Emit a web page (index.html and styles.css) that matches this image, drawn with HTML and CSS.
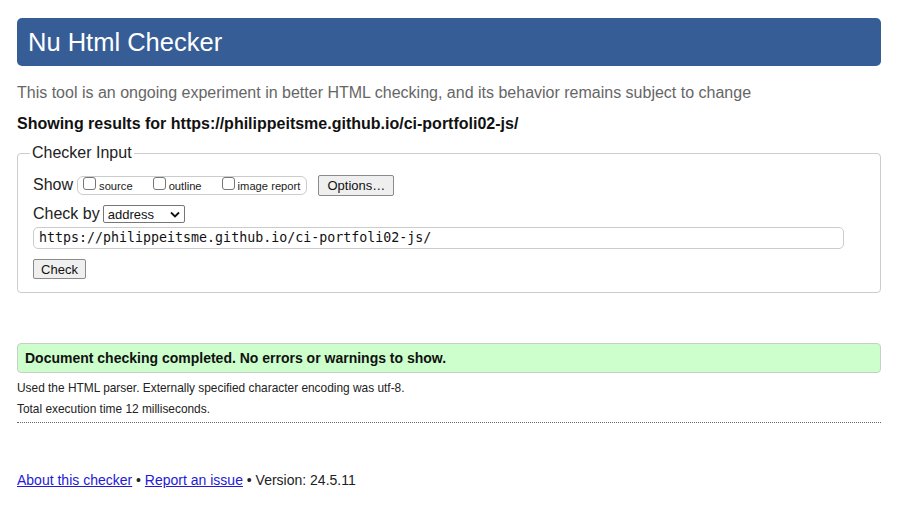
FILE: index.html
```html
<!DOCTYPE html>
<html>
<head>
<meta charset="utf-8">
<title>Nu Html Checker</title>
<link rel="stylesheet" href="styles.css">
</head>
<body>
<h1 class="banner">Nu Html Checker</h1>
<p class="lede">This tool is an ongoing experiment in better HTML checking, and its behavior remains subject to change</p>
<p class="showing">Showing results for https://philippeitsme.github.io/ci-portfoli02-js/</p>
<fieldset class="input-box">
  <legend class="legend">Checker Input</legend>
  <div class="row row1">
    <span class="label">Show</span>
    <span class="group">
      <label class="opt"><span class="cb"></span>source</label>
      <label class="opt"><span class="cb"></span>outline</label>
      <label class="opt"><span class="cb"></span>image report</label>
    </span>
    <button class="btn opts">Options…</button>
  </div>
  <div class="row row2">
    <span class="label">Check by</span>
    <span class="select">address<svg width="10" height="7" viewBox="0 0 10 7"><path d="M1 1.5 L5 5.5 L9 1.5" fill="none" stroke="#111" stroke-width="1.8"/></svg></span>
  </div>
  <div class="url">https://philippeitsme.github.io/ci-portfoli02-js/</div>
  <button class="btn check">Check</button>
</fieldset>
<div class="success">Document checking completed. No errors or warnings to show.</div>
<p class="details first">Used the HTML parser. Externally specified character encoding was utf-8.</p>
<p class="details">Total execution time 12 milliseconds.</p>
<hr class="sep">
<p class="footer"><a href="#">About this checker</a> • <a href="#">Report an issue</a> • Version: 24.5.11</p>
</body>
</html>
```
FILE: styles.css
```css
html, body { margin: 0; background: #fff; }
body {
  padding: 18px 17px 0;
  font-family: "Liberation Sans", Arial, sans-serif;
  color: #111;
}
.banner {
  margin: 0;
  height: 48px;
  background: #365d95;
  color: #fff;
  border-radius: 5px;
  font-weight: normal;
  font-size: 25.5px;
  line-height: 48px;
  padding-left: 11px;
}
.lede {
  margin: 17px 0 0;
  font-size: 16px;
  line-height: 19px;
  color: #666;
}
.showing {
  margin: 12px 0 0;
  font-size: 16px;
  line-height: 19px;
  font-weight: bold;
  color: #111;
}
.input-box {
  margin: 11px 0 0;
  border: 1px solid #ccc;
  border-radius: 4px;
  padding: 8px 15px 13px 15px;
}
.legend {
  font-size: 16px;
  padding: 0 2px;
  margin-left: -3px;
  color: #222;
}
.row { display: flex; align-items: center; height: 22px; }
.row1 { margin-top: 4px; }
.label { font-size: 16px; color: #222; margin-right: 4px; }
.row2 .label { margin-right: 3px; }
.group {
  display: inline-flex;
  align-items: center;
  border: 1px solid #ccc;
  border-radius: 6px;
  height: 17px;
  padding: 0 6px 0 5px;
  margin-right: 11px;
  margin-top: 1px;
}
.opt {
  display: inline-flex;
  align-items: center;
  font-size: 11.2px;
  color: #222;
  margin-right: 20px;
}
.opt:last-child { margin-right: 0; }
.cb {
  width: 11px;
  height: 11px;
  border: 1px solid #777;
  border-radius: 3px;
  margin-right: 3px;
  margin-top: -4px;
  background: #fff;
}
.btn {
  font-family: "Liberation Sans", Arial, sans-serif;
  font-size: 13px;
  color: #111;
  background: #efefef;
  border: 1px solid #8a8a8a;
  border-radius: 2px;
  padding: 0 7px;
  height: 21px;
}
.opts { width: 76px; }
.row2 { margin-top: 7px; }
.select {
  display: inline-flex;
  align-items: center;
  justify-content: space-between;
  width: 82px;
  height: 18px;
  box-sizing: border-box;
  border: 1px solid #767676;
  border-radius: 2px;
  padding: 0 4px 0 4px;
  font-size: 13px;
  color: #111;
}
.url {
  margin-top: 2px;
  width: 811px;
  height: 22px;
  box-sizing: border-box;
  border: 1px solid #ccc;
  border-radius: 5px;
  padding-left: 5px;
  font-family: "DejaVu Sans Mono", monospace;
  font-size: 13.3px;
  line-height: 20px;
  color: #111;
}
.check { display: block; margin-top: 10px; width: 53px; height: 20px; padding: 0; }
.success {
  margin-top: 50px;
  height: 30px;
  box-sizing: border-box;
  background: #ccffcc;
  border: 1px solid #c8cfc8;
  border-radius: 4px;
  padding-left: 7px;
  font-size: 14px;
  font-weight: bold;
  line-height: 28px;
  color: #111;
}
.details {
  margin: 0;
  font-size: 11.9px;
  line-height: 21px;
  color: #222;
}
.details.first { margin-top: 5px; }
.sep {
  margin: 2px 0 0;
  border: 0;
  border-top: 1px dotted #666;
  height: 0;
}
.footer {
  margin: 49px 0 0;
  font-size: 14px;
  line-height: 17px;
  color: #222;
}
.footer a { color: #2419d6; text-decoration: underline; }
```
